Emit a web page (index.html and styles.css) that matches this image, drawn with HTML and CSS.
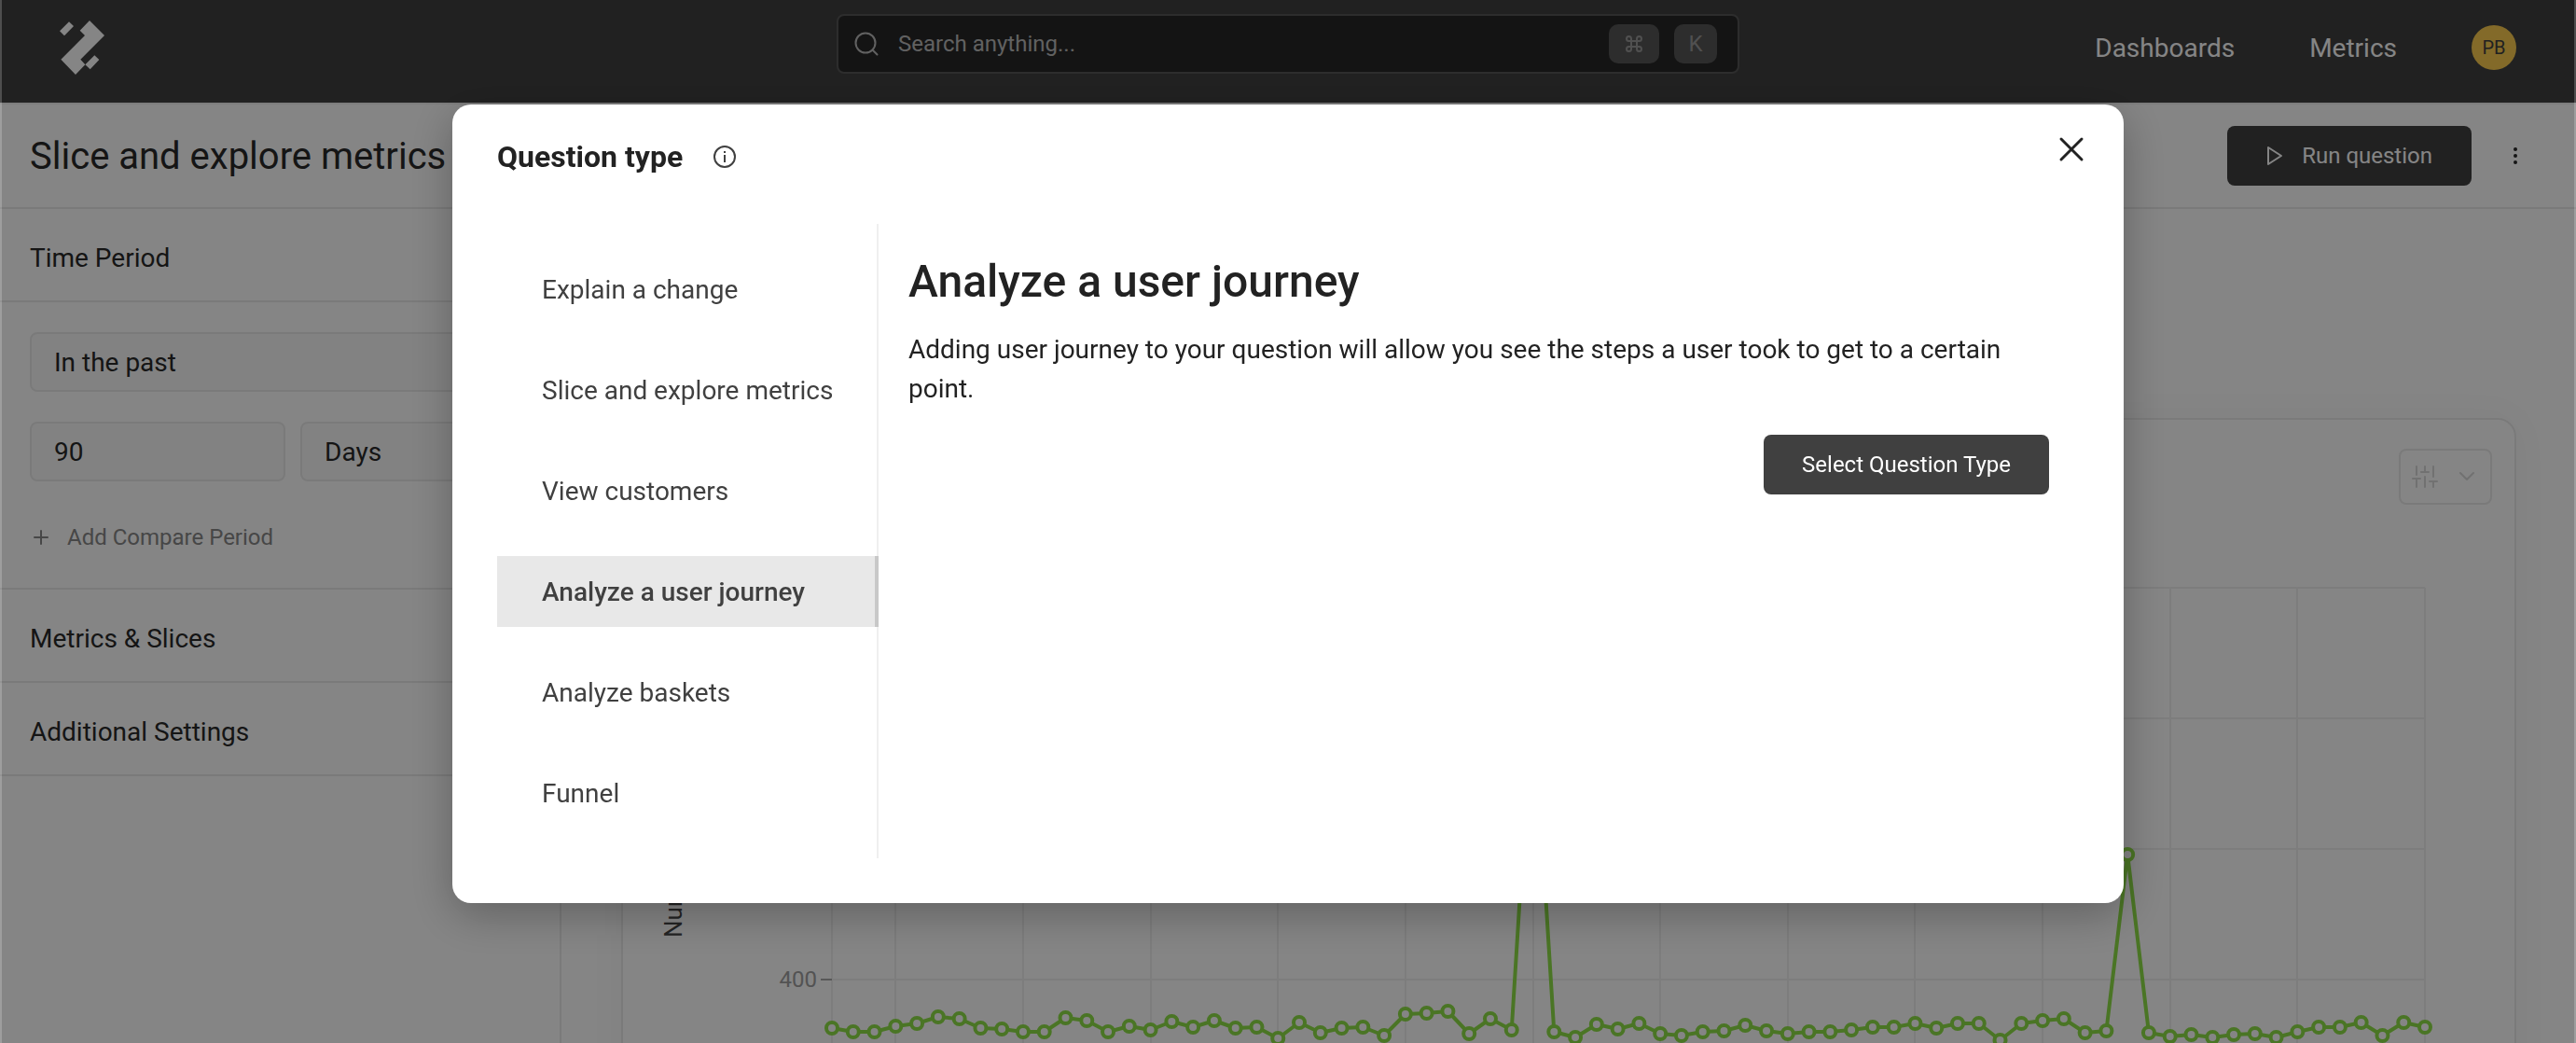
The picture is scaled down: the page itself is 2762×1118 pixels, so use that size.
FILE: index.html
```html
<!DOCTYPE html>
<html lang="en">
<head>
<meta charset="utf-8">
<title>Slice and explore metrics</title>
<link rel="stylesheet" href="styles.css">
</head>
<body>
<div class="app">
  <header class="topbar">
    <a class="logo" href="#" aria-label="Home">
      <svg width="48" height="58" viewBox="192 66 144 174" fill="#fff"><path d="M222 70l15 14-30 31-15-15zM288 66l48 48-77 77 15 17-31 32-47-49 77-77-16-16zM304 178l15 14-29 31-16-15z"/></svg>
    </a>
    <div class="search">
      <svg class="search-icon" width="28" height="28" viewBox="0 0 28 28" fill="none" stroke="currentColor" stroke-width="2" stroke-linecap="round"><circle cx="13" cy="13" r="10.500"/><path d="M20.500 20.500l5 5"/></svg>
      <input class="search-input" type="text" placeholder="Search anything..." aria-label="Search">
      <kbd class="key key-cmd"><svg width="18" height="18" viewBox="0 0 18 18" fill="none" stroke="currentColor" stroke-width="2"><path d="M6 6V3.500A2.500 2.500 0 1 0 3.500 6h11A2.500 2.500 0 1 0 12 3.500v11a2.500 2.500 0 1 0 2.500-2.500h-11A2.500 2.500 0 1 0 6 14.500z"/></svg></kbd>
      <kbd class="key">K</kbd>
    </div>
    <nav class="nav">
      <a href="#">Dashboards</a>
      <a href="#">Metrics</a>
      <button class="avatar" type="button">PB</button>
    </nav>
  </header>
  <div class="titlebar">
    <h1>Slice and explore metrics</h1>
    <button class="run" type="button">
      <svg width="18" height="22" viewBox="0 0 18 22" fill="none" stroke="currentColor" stroke-width="2" stroke-linejoin="round"><path d="M2 2v18l14-9z"/></svg>
      Run question
    </button>
    <button class="more" type="button" aria-label="More"><svg width="6" height="20" viewBox="0 0 6 20" fill="currentColor"><circle cx="3" cy="3" r="2"/><circle cx="3" cy="10" r="2"/><circle cx="3" cy="17" r="2"/></svg></button>
  </div>
  <div class="workspace">
    <aside class="sidebar">
      <h2>Time Period</h2>
      <div class="period">
        <select class="field" aria-label="Period"><option>In the past</option></select>
        <div class="field-row">
          <input class="field" type="text" value="90" aria-label="Amount">
          <select class="field" aria-label="Unit"><option>Days</option></select>
        </div>
        <button class="add" type="button"><svg width="16" height="16" viewBox="0 0 16 16" stroke="currentColor" stroke-width="2" stroke-linecap="round"><path d="M8 1v14M1 8h14"/></svg>Add Compare Period</button>
      </div>
      <h2>Metrics &amp; Slices</h2>
      <h2>Additional Settings</h2>
    </aside>
    <main class="main">
      <section class="card">
        <div class="card-tools">
          <button class="tune" type="button" aria-label="Chart settings" disabled>
            <svg width="28" height="24" viewBox="0 0 28 24" fill="none" stroke="currentColor" stroke-width="2" stroke-linecap="round"><path d="M5 1v9M5 14v9M1 14h8M14 1v6M14 12v11M10 7h8M23 1v11M23 17v6M19 17h8"/></svg>
            <svg width="18" height="12" viewBox="0 0 18 12" fill="none" stroke="currentColor" stroke-width="2" stroke-linecap="round" stroke-linejoin="round"><path d="M2 2l7 7 7-7"/></svg>
          </button>
        </div>
        <svg class="chart" id="chart" viewBox="668 560 2028 640">
          <g id="grid" class="grid"></g>
          <path class="tick" d="M880 1050h12"/>
          <text class="tick-label" x="876" y="1058" text-anchor="end">400</text>
          <text class="axis-title" transform="translate(731 1005) rotate(-90)">Number of customers</text>
          <polyline id="series" class="series"/>
          <g id="points" class="points"></g>
        </svg>
      </section>
    </main>
  </div>
</div>
<div class="backdrop">
  <div class="dialog" role="dialog" aria-modal="true" aria-labelledby="dialog-title">
    <div class="dialog-head">
      <h2 id="dialog-title">Question type</h2>
      <svg class="info" width="26" height="26" viewBox="0 0 26 26" fill="none" stroke="currentColor" stroke-width="2"><circle cx="13" cy="13" r="11"/><path d="M13 11v8M13 7v2"/></svg>
      <button class="close" type="button" aria-label="Close"><svg width="28" height="28" viewBox="0 0 28 28" stroke="currentColor" stroke-width="3" stroke-linecap="round"><path d="M3 3l22 22M25 3L3 25"/></svg></button>
    </div>
    <div class="dialog-body">
      <div class="menu">
        <button type="button">Explain a change</button>
        <button type="button">Slice and explore metrics</button>
        <button type="button">View customers</button>
        <button type="button" class="selected">Analyze a user journey</button>
        <button type="button">Analyze baskets</button>
        <button type="button">Funnel</button>
      </div>
      <div class="detail">
        <h3>Analyze a user journey</h3>
        <p>Adding user journey to your question will allow you see the steps a user took to get to a certain point.</p>
        <button class="select-type" type="button">Select Question Type</button>
      </div>
    </div>
  </div>
</div>
<script src="script.js"></script>
</body>
</html>
```
FILE: styles.css
```css
* { box-sizing: border-box; }
body { margin: 0; font-family: Roboto, "Liberation Sans", sans-serif; font-size: 28px; color: #2a2a2a; background: #fff; }
h1, h2, h3, p { margin: 0; }
button, input, select { font: inherit; color: inherit; margin: 0; }
button { border: 0; padding: 0; background: none; }
a { color: inherit; text-decoration: none; }
svg { display: block; flex: none; }

.app { height: 100vh; overflow: hidden; display: flex; flex-direction: column; }

/* Top bar */
.topbar { flex: none; height: 110px; padding: 0 64px 8px; background: #404040; color: #fff; display: grid; grid-template-columns: 1fr minmax(0, 968px) 1fr; align-items: center; }
.logo { justify-self: start; }
.search { height: 64px; margin-bottom: 8px; padding: 0 22px 0 16px; display: flex; align-items: center; border: 2px solid #575757; border-radius: 8px; background: #282828; color: #bbb; }
.search-input { flex: 1; min-width: 0; border: 0; padding: 0 0 0 20px; background: none; font-size: 24px; }
.search-input::placeholder { color: #bbb; opacity: 1; }
.key { display: flex; align-items: center; justify-content: center; width: 46px; height: 42px; margin-left: 16px; border-radius: 10px; background: #575757; color: #999; font: 24px Roboto, sans-serif; }
.key-cmd { width: 54px; }
.nav { justify-self: end; display: flex; align-items: center; gap: 80px; }
.avatar { width: 48px; height: 48px; border-radius: 50%; background: #fbcc50; color: #404040; font-size: 20px; }

/* Title bar */
.titlebar { flex: none; height: 114px; padding: 0 62px 0 32px; display: flex; align-items: center; border-top: 2px solid #efefef; border-bottom: 2px solid #eaeaea; }
.titlebar h1 { flex: 1; font-size: 40px; font-weight: 400; }
.run { height: 64px; padding: 0 42px; display: flex; align-items: center; gap: 20px; border-radius: 8px; background: #404040; color: #fff; font-size: 24px; }
.more { margin-left: 44px; }

/* Sidebar */
.workspace { flex: 1; min-height: 0; display: flex; }
.sidebar { flex: none; width: 602px; border-right: 2px solid #eaeaea; }
.sidebar h2 { height: 100px; padding: 6px 0 0 32px; display: flex; align-items: center; border-bottom: 2px solid #eaeaea; font-size: 28px; font-weight: 400; }
.period { padding: 32px 32px 26px; display: flex; flex-direction: column; gap: 32px; border-bottom: 2px solid #eaeaea; }
.field-row { display: flex; gap: 16px; }
.field { appearance: none; height: 64px; padding: 0 24px; flex: 1 1 auto; width: 100%; border: 2px solid #eaeaea; border-radius: 8px; background: #fafafa; }
.period > .field { flex: none; }
.field-row input.field { flex: none; width: 274px; }
.field-row select.field { width: 0; }
.add { height: 56px; padding-left: 4px; display: flex; align-items: center; gap: 20px; color: #888; font-size: 24px; }

/* Chart card */
.main { flex: 1; min-width: 0; padding: 224px 64px 0; }
.card { border: 2px solid #eaeaea; border-radius: 20px; box-shadow: 0 0 40px rgba(0, 0, 0, .04); }
.card-tools { padding: 31px 24px 19px; display: flex; justify-content: flex-end; }
.tune { width: 100px; height: 60px; padding: 0 16px 0 12px; display: flex; align-items: center; justify-content: space-between; border: 2px solid #eaeaea; border-radius: 8px; color: #d8d8d8; }
.chart { width: 100%; height: auto; }
.grid { stroke: #efefef; stroke-width: 2; }
.tick { stroke: #aaa; stroke-width: 2; }
.tick-label { font-size: 24px; fill: #a0a0a0; }
.axis-title { font-size: 26px; fill: #444; }
.series { fill: none; stroke: #8fe047; stroke-width: 4; stroke-linejoin: round; }
.points { fill: #fff; stroke: #8fe047; stroke-width: 4; }

/* Dialog */
.backdrop { position: fixed; inset: 0; padding-top: 112px; background: rgba(0, 0, 0, .48); border: solid rgba(255, 255, 255, .2); border-width: 0 2px; background-clip: border-box; }
.dialog { width: 94%; max-width: 1792px; margin: 0 auto; padding: 0 0 48px 48px; border-radius: 20px; background: #fff; color: #222; box-shadow: 0 12px 48px rgba(0, 0, 0, .28); }
.dialog-head { height: 128px; padding: 34px 42px 0 0; display: flex; align-items: flex-start; }
.dialog-head h2 { font-size: 32px; line-height: 44px; font-weight: 700; }
.info { margin: 9px 0 0 32px; color: #404040; }
.close { margin-left: auto; }
.dialog-body { display: flex; }
.menu { flex: none; width: 409px; padding: 32px 0; display: flex; flex-direction: column; gap: 32px; border-right: 2px solid #efefef; color: #404040; }
.menu button { height: 76px; padding-left: 48px; text-align: left; white-space: nowrap; }
.menu .selected { margin-right: -2px; background: #e8e8e8; border-right: 4px solid #c8c8c8; font-weight: 500; }
.detail { flex: 1; padding: 32px 80px 0 32px; display: flex; flex-direction: column; }
.detail h3 { font-size: 48px; line-height: 60px; font-weight: 500; }
.detail p { margin: 22px 0 28px; line-height: 42px; }
.select-type { align-self: flex-end; height: 64px; padding: 0 41px; border-radius: 8px; background: #404040; color: #fff; font-size: 24px; }
```
FILE: script.js
```js
const svgNS = "http://www.w3.org/2000/svg";
const left = 892, right = 2600, top0 = 630;
const ys = [
  1102, 1106, 1106, 1100, 1097, 1090, 1092, 1102, 1103, 1106, 1106, 1091, 1094, 1106, 1100, 1104,
  1095, 1101, 1094, 1102, 1101, 1113, 1096, 1107, 1102, 1101, 1110, 1087, 1086, 1084, 1108, 1092,
  1104, 740, 1106, 1112, 1098, 1103, 1097, 1108, 1110, 1106, 1105, 1099, 1105, 1108, 1106, 1106,
  1104, 1101, 1101, 1097, 1102, 1097, 1097, 1115, 1097, 1094, 1092, 1107, 1105, 916, 1107, 1111,
  1109, 1112, 1109, 1108, 1112, 1106, 1101, 1101, 1096, 1110, 1096, 1101
];
const xAt = i => left + (right - left) * i / (ys.length - 1);

function add(parent, name, attrs) {
  const el = document.createElementNS(svgNS, name);
  for (const key in attrs) el.setAttribute(key, attrs[key]);
  document.getElementById(parent).appendChild(el);
}

// Horizontal lines at each value step, vertical lines every sixth day
for (let row = 0; row < 5; row++) {
  const y = top0 + row * 140;
  add("grid", "line", { x1: left, x2: right, y1: y, y2: y });
}
add("grid", "line", { x1: left, x2: left, y1: top0, y2: 1200 });
for (let i = 3; i < ys.length; i += 6) {
  const x = Math.round(xAt(i));
  add("grid", "line", { x1: x, x2: x, y1: top0, y2: 1200 });
}

document.getElementById("series").setAttribute("points", ys.map((y, i) => xAt(i) + "," + y).join(" "));
ys.forEach((y, i) => add("points", "circle", { cx: xAt(i), cy: y, r: 6 }));
```
